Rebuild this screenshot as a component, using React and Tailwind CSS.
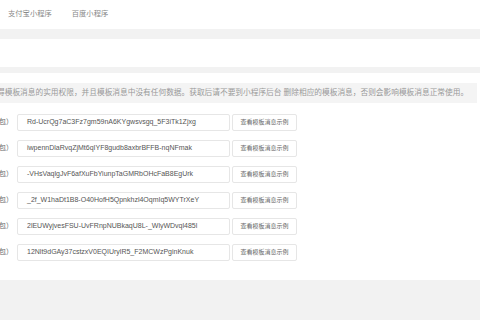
export default function App() {
  const rows = [
    "Rd-UcrQg7aC3Fz7gm59nA6KYgwsvsgq_5F3iTk1Zjxg",
    "iwpennDlaRvqZjMt6qIYF8gudb8axbrBFFB-nqNFmak",
    "-VHsVaqlgJvF6afXuFbYiunpTaGMRbOHcFaB8EgUrk",
    "_2f_W1haDt1B8-O40HofH5Qpnkhzl4OqmIq5WYTrXeY",
    "2lEUWyjvesFSU-UvFRnpNUBkaqU8L-_WlyWDvql485l",
    "12Nlt9dGAy37cstzxV0EQIUrylR5_F2MCWzPginKnuk",
  ];
  return (
    <div
      className="w-[480px] h-[320px] overflow-hidden bg-[#f2f2f2]"
      style={{ fontFamily: '"Liberation Sans", Arial, "Noto Sans CJK SC", sans-serif' }}
    >
      <div className="h-[29px] bg-white flex items-center pl-[8px] gap-[20px] text-[7.3px] text-[#888]">
        <span>支付宝小程序</span>
        <span>百度小程序</span>
      </div>
      <div className="mt-[10px] h-[28px] bg-white" />
      <div className="mt-[6px] h-[207px] bg-white pt-[10px] overflow-hidden">
        <div className="h-[20px] mr-[3px] bg-[#f4f4f4] flex items-center overflow-hidden">
          <span className="ml-[-3px] whitespace-nowrap text-[7.7px] text-[#999]">
            得模板消息的实用权限，并且模板消息中没有任何数据。获取后请不要到小程序后台 删除相应的模板消息，否则会影响模板消息正常使用。
          </span>
        </div>
        <div className="mt-[11px] flex flex-col gap-[9px]">
          {rows.map((r, i) => (
            <div key={i} className="flex items-center h-[17px]">
              <span className="w-[18px] ml-[-1px] whitespace-nowrap text-[7px] text-[#666]">包）</span>
              <div className="w-[213px] h-[17px] border border-[#e6e6e6] rounded-[2px] flex items-center pl-[9px] text-[7px] text-[#555] whitespace-nowrap overflow-hidden">
                {r}
              </div>
              <div className="ml-[2px] w-[65px] h-[17px] border border-[#e6e6e6] rounded-[2px] flex items-center justify-center text-[6px] text-[#666] whitespace-nowrap">
                查看模板消息示例
              </div>
            </div>
          ))}
        </div>
      </div>
    </div>
  );
}
